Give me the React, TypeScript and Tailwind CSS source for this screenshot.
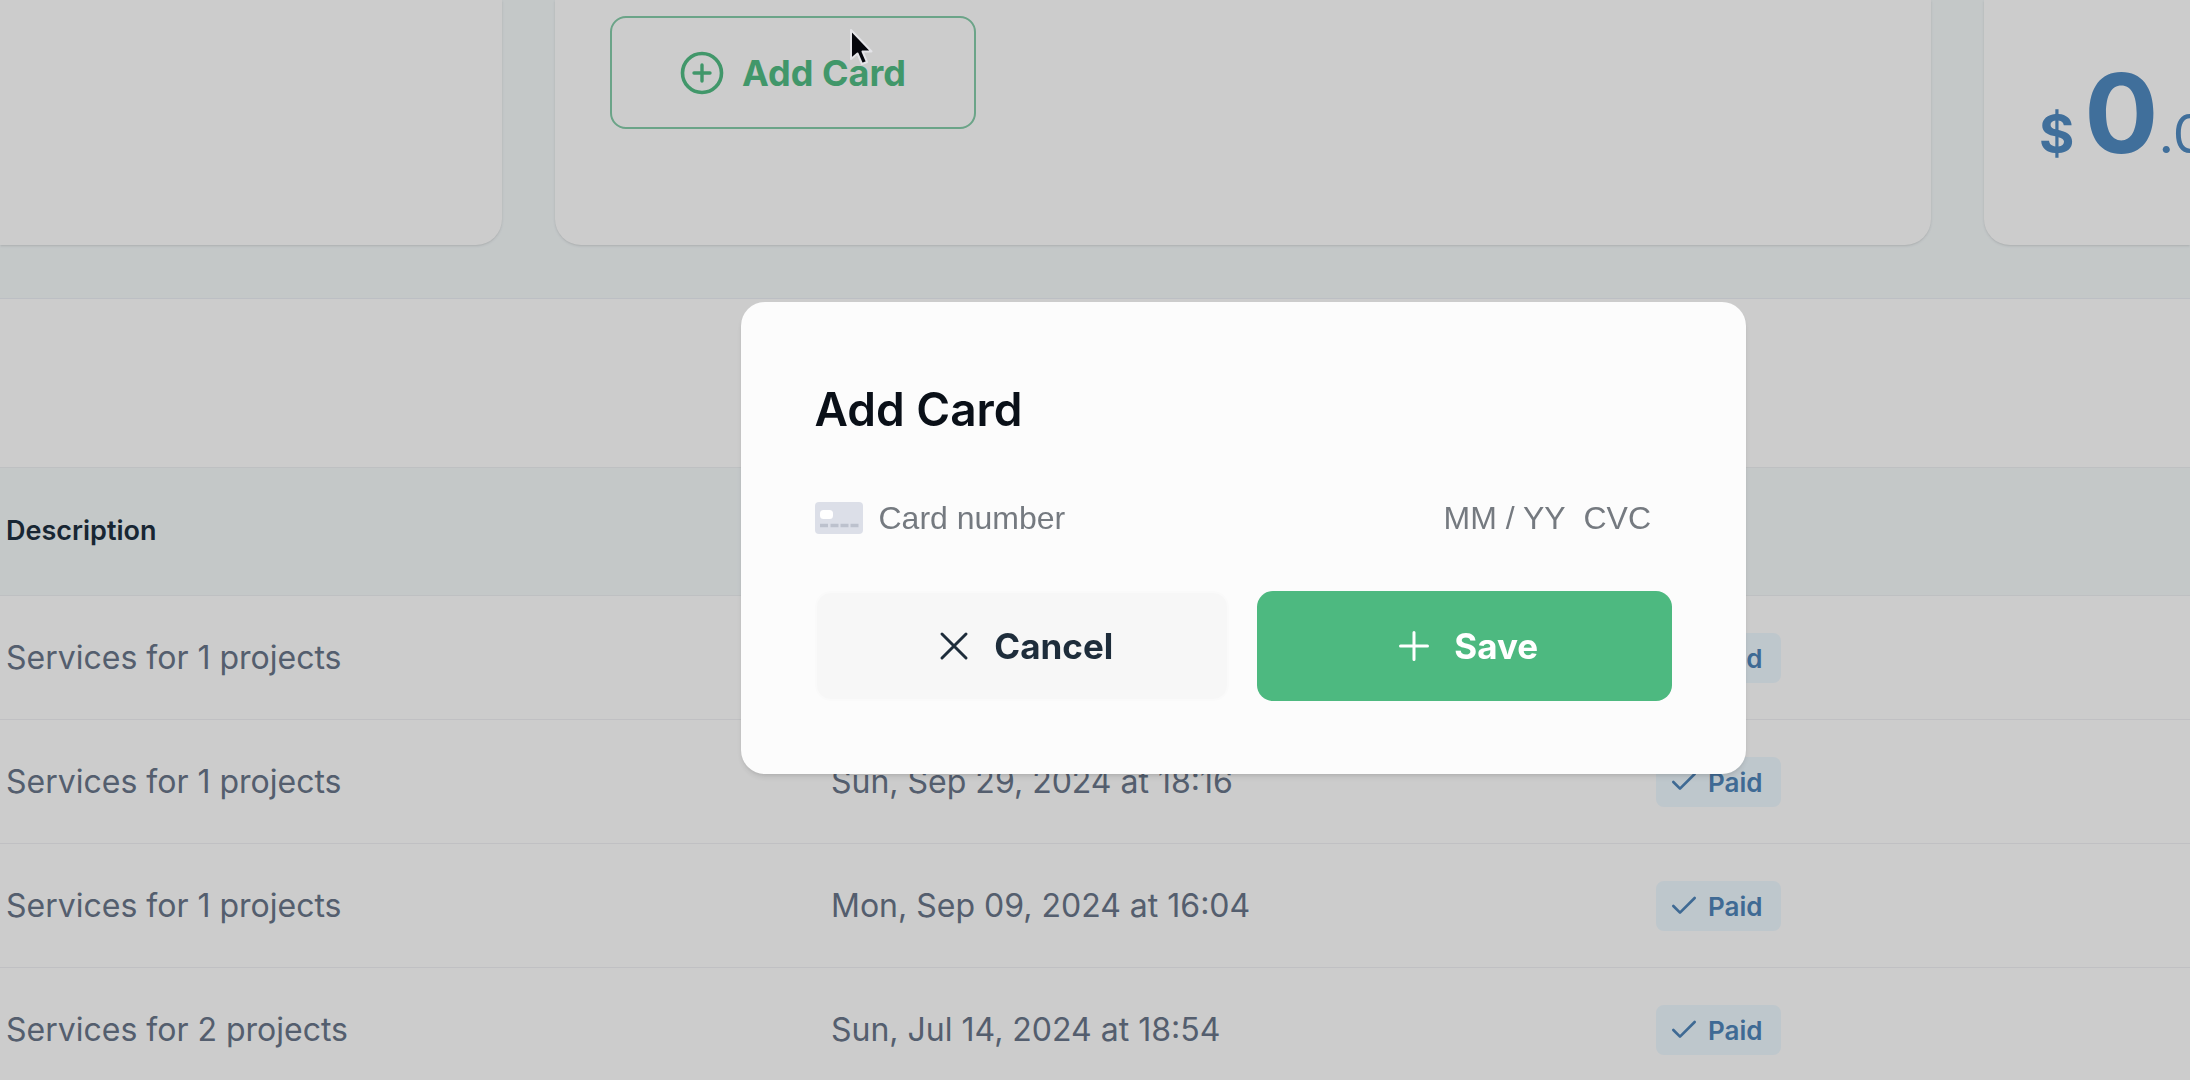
import React from 'react';
import { Check } from 'lucide-react';

interface Invoice {
  description: string;
  date: string;
  status: string;
}

const invoices: Invoice[] = [
  { description: 'Services for 1 projects', date: '', status: 'Paid' },
  { description: 'Services for 1 projects', date: 'Sun, Sep 29, 2024 at 18:16', status: 'Paid' },
  { description: 'Services for 1 projects', date: 'Mon, Sep 09, 2024 at 16:04', status: 'Paid' },
  { description: 'Services for 2 projects', date: 'Sun, Jul 14, 2024 at 18:54', status: 'Paid' }
];

const CirclePlusIcon: React.FC = () => (
  <svg className="size-11 shrink-0" viewBox="0 0 44 44" fill="none" stroke="currentColor" strokeLinecap="round" aria-hidden="true">
    <circle cx="22" cy="22" r="19.5" strokeWidth="3.6" />
    <path d="M22 14v16M14 22h16" strokeWidth="3.4" />
  </svg>
);

const CloseIcon: React.FC = () => (
  <svg className="size-8 shrink-0" viewBox="0 0 32 32" fill="none" stroke="currentColor" strokeWidth="3" strokeLinecap="round" aria-hidden="true">
    <path d="M4 4l24 24M28 4L4 28" />
  </svg>
);

const PlusIcon: React.FC = () => (
  <svg className="size-8 shrink-0" viewBox="0 0 32 32" fill="none" stroke="currentColor" strokeWidth="3" strokeLinecap="round" aria-hidden="true">
    <path d="M16 2.5v27M2.5 16h27" />
  </svg>
);

const CreditCardIcon: React.FC = () => (
  <svg className="h-8 w-12 shrink-0" viewBox="0 0 48 32" aria-hidden="true">
    <rect width="48" height="32" rx="4" fill="#dcdfe8" />
    <rect x="5" y="8" width="13" height="9" rx="3.5" fill="#fff" />
    <path d="M5 23.5h8M15.5 23.5h8M25.5 23.5h8M35.5 23.5h8" stroke="#bcc1cd" strokeWidth="3.5" />
  </svg>
);

const Cursor: React.FC = () => (
  <svg className="pointer-events-none absolute top-[27px] left-[848px] h-10 w-8" viewBox="0 0 32 40" aria-hidden="true">
    <path
      d="M3 3v29l6.5-5.5 4.5 10.5 5-2-4.5-10.5h9z"
      fill="#05060c"
      stroke="#e4e4e8"
      strokeWidth="2"
      strokeLinejoin="round"
    />
  </svg>
);

const StatusBadge: React.FC<{ label: string }> = ({ label }) => (
  <span className="inline-flex h-[50px] items-center gap-2 rounded-lg bg-[#eef9ff] pr-[18px] pl-3 align-middle text-[26px] font-semibold text-[#4f85b9]">
    <Check className="size-8" strokeWidth={2} />
    {label}
  </span>
);

const SummaryCards: React.FC = () => (
  <section className="flex gap-[53px]">
    <div className="w-[502px] shrink-0 rounded-br-[26px] bg-white shadow" />
    <div className="min-w-0 flex-1 rounded-b-[26px] bg-white px-[55px] pt-4 pb-[116px] shadow">
      <button
        type="button"
        className="flex h-[113px] items-center gap-[18px] rounded-2xl border-2 border-[#86cdaa] px-[68px] text-[36px] font-bold text-[#52bd85]"
      >
        <CirclePlusIcon />
        <span>Add Card</span>
      </button>
    </div>
    <div className="w-[206px] shrink-0 overflow-hidden rounded-bl-[26px] bg-white pt-[45px] pl-[55px] whitespace-nowrap text-[#518bc2] shadow">
      <div className="flex items-baseline leading-[136px]">
        <span className="mr-2.5 text-[54px] font-bold">$</span>
        <span className="text-[110px] font-bold">0</span>
        <span className="text-[54px]">.00</span>
      </div>
    </div>
  </section>
);

const InvoiceTable: React.FC = () => (
  <section className="mt-[53px] border-t border-[#eceff6] bg-white pt-[168px]">
    <table className="w-full table-fixed border-collapse text-left">
      <thead>
        <tr className="h-32 border-y border-[#eef1f3] bg-[#f5fafb] text-[27px] text-[#1e3040]">
          <th className="w-[825px] pl-1.5 font-semibold">Description</th>
          <th className="w-[825px] pl-1.5" />
          <th className="pl-1.5" />
        </tr>
      </thead>
      <tbody>
        {invoices.map((invoice, index) => (
          <tr key={index} className="h-[124px] border-b border-[#f0f1f4] text-[32px] text-[#69768a]">
            <td className="pl-1.5">{invoice.description}</td>
            <td className="pl-1.5">{invoice.date}</td>
            <td className="pl-1.5">
              <StatusBadge label={invoice.status} />
            </td>
          </tr>
        ))}
      </tbody>
    </table>
  </section>
);

const AddCardDialog: React.FC = () => {
  const inputClass =
    "bg-transparent font-['Liberation_Sans',sans-serif] text-[32px] text-[#30313d] outline-none placeholder:text-[#757a80]";

  return (
    <div className="fixed inset-0 flex items-center justify-center bg-black/20 pb-1 pl-[296px]">
      <form
        role="dialog"
        aria-labelledby="add-card-title"
        className="w-full max-w-[1005px] rounded-3xl bg-[#fcfcfc] px-[74px] pt-[74px] pb-[73px] shadow-md"
        onSubmit={(event) => event.preventDefault()}
      >
        <h2 id="add-card-title" className="text-[46px] leading-[66px] font-semibold text-[#0a1018]">
          Add Card
        </h2>

        <div className="mt-[52px] flex h-12 items-center">
          <CreditCardIcon />
          <input className={`ml-4 min-w-0 flex-1 ${inputClass}`} aria-label="Card number" placeholder="Card number" />
          <input className={`w-[140px] ${inputClass}`} aria-label="Expiry date" placeholder="MM / YY" />
          <input className={`w-[88px] ${inputClass}`} aria-label="CVC" placeholder="CVC" />
        </div>

        <div className="mt-[49px] grid grid-cols-2 gap-7 text-[35px] font-bold">
          <button
            type="button"
            className="flex h-[110px] items-center justify-center gap-6 rounded-2xl border-2 border-[#fafafa] bg-[#f7f7f7] pl-2 text-[#1e2d3b]"
          >
            <CloseIcon />
            Cancel
          </button>
          <button
            type="submit"
            className="flex h-[110px] items-center justify-center gap-6 rounded-2xl bg-[#4db980] pl-2 text-white"
          >
            <PlusIcon />
            Save
          </button>
        </div>
      </form>
    </div>
  );
};

export default function App() {
  return (
    <main className="relative h-screen overflow-hidden bg-[#f5fafb] font-['Inter',sans-serif]">
      <SummaryCards />
      <InvoiceTable />
      <AddCardDialog />
      <Cursor />
    </main>
  );
}
